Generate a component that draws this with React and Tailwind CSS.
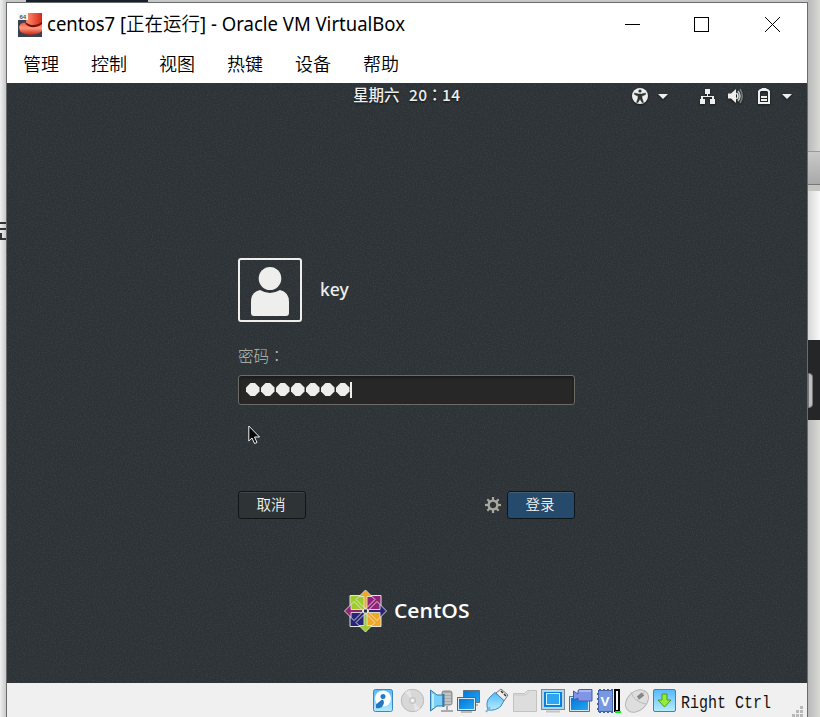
import React from "react";

const menus = ["管理", "控制", "视图", "热键", "设备", "帮助"];

function HatIcon() {
  return (
    <svg width="24" height="24" viewBox="0 0 24 24" className="shrink-0">
      <defs>
        <linearGradient id="hat" x1="0" y1="0" x2="0" y2="1">
          <stop offset="0" stopColor="#f5543a" />
          <stop offset=".45" stopColor="#ff9a80" />
          <stop offset="1" stopColor="#c92512" />
        </linearGradient>
        <linearGradient id="crown" x1="0" y1="0" x2="1" y2="0">
          <stop offset="0" stopColor="#ff9275" />
          <stop offset="1" stopColor="#d92413" />
        </linearGradient>
      </defs>
      <rect width="24" height="24" fill="#394150" />
      <path d="M9 0H24V12Q16 15 8 10Z" fill="url(#crown)" />
      <path d="M1 14C2 10 5 9 8 10C12 15 19 15 24 10V18C19 23 6 23 2 18Z" fill="url(#hat)" />
      <path d="M8 9.500C12 13 19 13 24 9V11C18 15.500 11 15 7.500 11Z" fill="#76120d" />
      <rect width="10" height="7" fill="#f3f5f6" />
      <text x="1.500" y="6" fontSize="6" fontWeight="700" fontFamily="Liberation Sans, sans-serif" fill="#4c545d">64</text>
    </svg>
  );
}

function TitleBar() {
  return (
    <div className="flex h-11 items-center bg-white pl-[11px] text-black">
      <HatIcon />
      <svg width="366" height="44" className="ml-[5px] shrink-0 overflow-visible font-['Noto_Sans','Noto_Sans_CJK_SC',sans-serif]">
        <text x="0" y="28" fontSize="19.500" textLength="358" lengthAdjust="spacingAndGlyphs">centos7 [<tspan className="font-['Noto_Sans_CJK_SC',sans-serif] font-[350]">正在运行</tspan>] - Oracle VM VirtualBox</text>
      </svg>
      <svg width="156" height="18" viewBox="0 0 156 18" fill="none" stroke="#000" className="ml-[211px] shrink-0">
        <path d="M1 8.500H16M70.500 1.500H84.500V15.500H70.500ZM141 1L156 16M156 1L141 16" shapeRendering="crispEdges" />
      </svg>
    </div>
  );
}

function StatusIcons() {
  return (
    <svg width="168" height="20" viewBox="632 86 168 20" fill="#eeeeec" className="drop-shadow-[0_1px_1px_#151819]">
      <circle cx="640" cy="96" r="8" />
      <circle cx="640" cy="91" r="1.600" fill="#2e3436" />
      <path d="M634.500 93L638.500 94H641.500L645.500 93V94.500L642 96V98L643.500 102.500H642L640 99L638 102.500H636.500L638 98V96L634.500 94.500Z" fill="#2e3436" stroke="#2e3436" strokeWidth=".5" />
      <path d="M658 94H668L663 99ZM782 94H792L787 99Z" />
      <path d="M705 89h5v5h-2v2h6v3h1v5h-5v-5h2v-2h-9v2h2v5h-5v-5h1v-3h6v-2h-2Z" />
      <path d="M728 93.500h3l5-4.500v14l-5-4.500h-3Z" />
      <path d="M736.500 93Q739.500 96 736.500 99" fill="none" stroke="#eeeeec" strokeWidth="1.600" />
      <path d="M738 91Q742 96 738 101" fill="none" stroke="#c6c9c7" strokeWidth="1.600" />
      <path d="M740 89Q744.500 96 740 103" fill="none" stroke="#777b7c" strokeWidth="1.600" />
      <path fillRule="evenodd" d="M760 89h1.500v-1h5v1h1.500l2 2v13h-12V91ZM761 91l-1 1v10h8V92l-1-1Z" />
      <path d="M761 96h6v2h-6ZM761 99h6v2h-6Z" />
    </svg>
  );
}

function Avatar() {
  return (
    <div className="size-16 rounded-[3px] border-2 border-[#eeeeec]">
      <svg width="60" height="60" viewBox="0 0 60 60" fill="#eeeeec">
        <ellipse cx="30" cy="18.500" rx="11.300" ry="11.500" />
        <path d="M20 30Q30 36 40 30Q49 32 49 42V53Q49 56 46 56H14Q11 56 11 53V42Q11 32 20 30Z" />
      </svg>
    </div>
  );
}

function Gear() {
  return (
    <svg width="16" height="16" viewBox="-8 -8 16 16" fill="none" stroke="#aaa99f">
      <circle r="4.400" strokeWidth="2.400" />
      {[0, 45, 90, 135, 180, 225, 270, 315].map((a) => (
        <path key={a} d="M0 -5V-8" strokeWidth="2.200" transform={`rotate(${a})`} />
      ))}
    </svg>
  );
}

const arms = [
  { angle: 0, square: "#932279", arrow: "#efa724" },
  { angle: 90, square: "#efa724", arrow: "#262577" },
  { angle: 180, square: "#262577", arrow: "#9ccd2a" },
  { angle: 270, square: "#9ccd2a", arrow: "#932279" },
];

function CentLogo() {
  return (
    <svg width="126" height="44" viewBox="0 0 126 44" className="overflow-visible">
      <g stroke="#e4e4e0" strokeWidth="1" transform="translate(21.500 22)">
        {arms.map((a) => (
          <path key={a.angle} d="M.5 -15.500H15.500V-.5H.5Z" fill={a.square} transform={`rotate(${a.angle})`} />
        ))}
        {arms.map((a) => (
          <g key={a.angle} transform={`rotate(${a.angle})`}>
            <path d="M0 -21L6.500 -14.500H1.500V-3H-1.500V-14.500H-6.500Z" fill={a.arrow} strokeWidth=".9" />
            <path d="M6.500 -14.500L9.500 -11.500L2 -4M-6.500 -14.500L-9.500 -11.500L-2 -4" fill="none" strokeWidth=".9" />
          </g>
        ))}
        <path d="M-2 -2H2V2H-2Z" fill="#293136" />
      </g>
      <text x="50" y="28.500" fontSize="19" fontWeight="600" fill="#fff" fontFamily="Open Sans, sans-serif" textLength="75.500" lengthAdjust="spacingAndGlyphs">CentOS</text>
    </svg>
  );
}

function Guest() {
  return (
    <main className="relative isolate flex h-[600px] flex-col bg-[#2c3235] font-['Noto_Sans','Noto_Sans_CJK_SC',sans-serif]">
      <svg className="pointer-events-none absolute inset-0 -z-10" width="800" height="600">
        <filter id="grain" x="0" y="0" width="100%" height="100%">
          <feTurbulence type="fractalNoise" baseFrequency=".75" numOctaves="2" seed="4" />
          <feColorMatrix values="0 0 0 0 .65  0 0 0 0 .75  0 0 0 0 .75  .5 0 0 0 -.19" />
        </filter>
        <rect width="800" height="600" filter="url(#grain)" opacity=".3" />
      </svg>
      <header className="flex h-[27px] pl-[346px]">
        <div className="flex h-[25px] w-[110px] whitespace-nowrap text-[15.500px] font-medium leading-[23px] text-[#eee] font-['Noto_Sans_CJK_TC',sans-serif] [text-shadow:0_1px_2px_#111]">
          <span className="w-[56px]">星期六</span>
          <span className="w-[18px] tracking-[.4px]">20</span>
          <span className="w-[15px] text-center">：</span>
          <span className="tracking-[.4px]">14</span>
        </div>
        <div className="ml-[169px] pt-[3px]"><StatusIcons /></div>
      </header>
      <section className="ml-[231px] mt-[148px] w-[337px]">
        <div className="flex items-center gap-[18px]">
          <Avatar />
          <span className="pb-[2px] text-[17.500px] font-medium leading-6 text-[#eeeeec]">key</span>
        </div>
        <div className="mt-[21px] h-[27px] text-[15.500px] font-light leading-[24px] text-[#babdb6] font-['Noto_Sans_CJK_TC',sans-serif]">密码：</div>
        <div className="mt-[5px] flex h-[30px] items-center gap-px rounded-[3px] border border-[#6b6c66] bg-[#272727] pb-px pl-[7px] shadow-[inset_0_2px_3px_#1b1b1b]">
          {[0, 1, 2, 3, 4, 5, 6].map((n) => (
            <svg key={n} width="14" height="14" viewBox="0 0 14 14" fill="#eeeeec"><path d="M4.500 0H9L13.500 4.500V8.500L9 13H4.500L0 8.500V4.500Z" /></svg>
          ))}
          <i className="-ml-px h-4 w-[2px] bg-[#eeeeec]" />
        </div>
        <svg className="ml-[10px] mt-5" width="14" height="20" viewBox="0 0 14 20"><path d="M.8 1V16L4 13L6.500 18.500L9 17.500L6.500 12H11.500Z" fill="#070809" stroke="#f3f3f3" /></svg>
        <div className="mt-[46px] flex h-7 items-center text-[14.500px] font-[350] leading-6 text-[#f4f4f2] font-['Noto_Sans_CJK_SC',sans-serif]">
          <button className="h-7 w-[68px] rounded-[3px] border border-[#111517] bg-[#2e3436] pb-[3px] pr-[2px] shadow-[inset_0_1px_0_#41484a]">取消</button>
          <div className="ml-[179px] mr-[6px]"><Gear /></div>
          <button className="h-7 w-[68px] rounded-[3px] border border-[#0e151a] bg-[#264a6c] pb-[3px] pr-[2px] shadow-[inset_0_1px_0_#455d70]">登录</button>
        </div>
      </section>
      <div className="ml-[337px] mt-[70px]"><CentLogo /></div>
    </main>
  );
}

function DeviceIcons() {
  return (
    <svg width="305" height="30" viewBox="373 687 305 30" className="shrink-0">
      <defs>
        <linearGradient id="sky" x1="0" y1="0" x2="0" y2="1"><stop stopColor="#55b8ff" /><stop offset="1" stopColor="#b5edff" /></linearGradient>
        <linearGradient id="screen" x1="0" y1="0" x2="1" y2="1"><stop stopColor="#0875d6" /><stop offset="1" stopColor="#20a8f4" /></linearGradient>
      </defs>
      <rect x="373.500" y="689.500" width="19" height="22" rx="2" fill="url(#sky)" stroke="#3b86bb" />
      <circle cx="383" cy="698.500" r="8" fill="#fff" />
      <path d="M376 704.500L382 699.500Q386 701 382 707Q378 709 376 708Z" fill="#2478c0" /><circle cx="383" cy="696.500" r="2.500" fill="#267bc3" />

      <circle cx="412.500" cy="700.500" r="11.200" fill="#d8d8d8" stroke="#bbb" />
      <path d="M412 700L405 692L410 690ZM413 701L420 709L415 711Z" fill="#e6e6e6" />
      <circle cx="412.500" cy="700.500" r="3" fill="#ddd" stroke="#bbb" /><circle cx="412.500" cy="700.500" r="1.200" fill="#fff" />

      <rect x="442" y="691" width="10" height="14" rx="2" fill="#aaa" stroke="#888" />
      <path d="M443 694H451M443 697H451M443 700H451M443 703H451" stroke="#ddd" />
      <path d="M447 706V711M441 711H453" stroke="#aaa" strokeWidth="2" />
      <path d="M430.500 690L437 695H443V706H437L430.500 711Z" fill="#7bd0fa" stroke="#347caf" />
      <path d="M433 694V708" stroke="#b9eeff" strokeWidth="2" /><path d="M443.500 694V707" stroke="#3478ad" strokeWidth="2" />

      <path d="M463.500 690.500H479.500V702.500H463.500Z" fill="url(#screen)" stroke="#65727a" />
      <path d="M472 705H478" stroke="#777" />
      <path d="M457.500 697.500H475.500V710.500H457.500Z" fill="#d5e6ee" stroke="#506577" />
      <path d="M459 699H474V709H459Z" fill="url(#screen)" /><path d="M461 712H472" stroke="#bbb" strokeWidth="2" />

      <path d="M496 693L501 689L508 695L504 701Z" fill="#eee" stroke="#777" />
      <path d="M501 691L503 693M504 694L506 696" stroke="#333" strokeWidth="1.500" />
      <path d="M488 710Q485 702 490 697L495 692.500L504 700.500L501 706Q496 711 488 710Z" fill="url(#sky)" stroke="#4287b9" />
      <path d="M486 712L490 707" stroke="#78b4da" strokeWidth="2" />

      <path d="M513.500 711.500V693.500H524.500L527.500 690.500H536.500V711.500Z" fill="#ddd" stroke="#c2c2c2" />
      <path d="M514 695H526L529 692" fill="none" stroke="#c9c9c9" />

      <rect x="541.500" y="689.500" width="23" height="20" fill="#b5d4e5" stroke="#718b9b" />
      <rect x="544" y="692" width="18" height="15" fill="#0980d9" />
      <rect x="546.500" y="693.500" width="13" height="11" fill="#2ca5f3" stroke="#d1f2ff" />
      <path d="M546 711.500H560" stroke="#c4c4c4" strokeWidth="2" />

      <path d="M569.500 696.500H589.500V711.500H569.500Z" fill="#d5e6ee" stroke="#54728a" />
      <path d="M571 698H588V710H571Z" fill="url(#screen)" />
      <path d="M573.500 691L578 694V691Q578 689.500 580 689.500H592V701H578V698L573.500 700Z" fill="#8095e4" stroke="#435cb0" />
      <path d="M579 691H591" stroke="#a8b7f3" strokeWidth="2" />

      <path d="M600 689V713M604 689V713M608 689V713M612 689V713" stroke="#4265a7" strokeWidth="2" />
      <path d="M597 694H600M597 699H600M597 704H600M597 709H600" stroke="#4265a7" strokeWidth="2" />
      <rect x="598.500" y="690.500" width="14" height="21" fill="#7698df" stroke="#4564a5" />
      <text x="600.500" y="706" fontSize="13.500" fontWeight="700" fontFamily="Liberation Sans, sans-serif" fill="#fff">V</text>
      <path d="M614 689H620V712H614Z" fill="#000" /><path d="M616 691H618V710H616Z" fill="#fff" /><path d="M615 712H621" stroke="#00f514" strokeWidth="2" />

      <ellipse cx="637" cy="701" rx="13" ry="9.500" transform="rotate(-43 637 701)" fill="#dedede" stroke="#b7b7b7" />
      <path d="M631 692Q634 702 646 704M637 701L645 691" fill="none" stroke="#bbb" />
      <path d="M638 698L643 694" stroke="#858585" strokeWidth="4" />

      <rect x="653.500" y="689.500" width="22" height="22" rx="1.500" fill="url(#sky)" stroke="#4581af" />
      <path d="M662 694H667V700H671L664.500 707L658 700H662Z" fill="#91ed3b" stroke="#57961d" />
    </svg>
  );
}

function Footer() {
  return (
    <footer className="flex h-[34px] bg-[#f0f0f0] pl-[366px] pt-1">
      <DeviceIcons />
      <svg width="95" height="30" className="ml-[2px] shrink-0 overflow-visible">
        <text x="1" y="21" fontFamily="Liberation Mono, monospace" fontSize="17.500" textLength="90" lengthAdjust="spacingAndGlyphs" fill="#111">Right Ctrl</text>
      </svg>
      <svg width="12" height="12" viewBox="0 0 12 12" className="ml-[17px] mt-[18px]" fill="#b8b8b8"><path d="M8 1h3v3H8ZM4 5h3v3H4ZM8 5h3v3H8ZM0 9h3v3H0ZM4 9h3v3H4ZM8 9h3v3H8Z" /></svg>
    </footer>
  );
}

export default function App() {
  return (
    <div className="flex h-[717px] w-[820px] overflow-hidden bg-[#ddd]">
      <aside className="flex w-[6px] shrink-0 flex-col bg-linear-to-r from-[#f0f0f0] to-[#c9c9c9] pt-[222px]">
        <div className="h-[18px] border-y-2 border-[#303234] pt-[4px]"><div className="h-[2px] bg-[#303234]" /><div className="mt-[3px] h-[7px] w-[2px] bg-[#303234]" /></div>
      </aside>
      <div className="w-[802px] shrink-0">
        <div className="flex h-[2px] bg-[#c7c7c7] pl-5"><div className="w-[122px] bg-[#171e2c]" /></div>
        <div className="h-[715px] border border-b-0 border-[#686c6d]">
          <TitleBar />
          <nav className="flex h-9 gap-8 bg-white pl-4 pt-[3px] text-[18px] font-[350] leading-[26px] text-black font-['Noto_Sans_CJK_SC',sans-serif]">
            {menus.map((m) => <span key={m} className="w-9 whitespace-nowrap">{m}</span>)}
          </nav>
          <Guest />
          <Footer />
        </div>
      </div>
      <aside className="flex w-3 shrink-0 flex-col bg-linear-to-r from-[#b9b9b9] to-[#d9d9d6]">
        <div className="h-[151px]" />
        <div className="h-[34px] border-b border-t border-b-[#777] border-t-[#999] bg-linear-to-b from-[#c9c9c9] to-[#a9a9a9]" />
        <div className="h-[6px] bg-[#c4c4c1]" />
        <div className="h-[149px] bg-linear-to-r from-[#d6d6d6] to-[#fafafa]" />
        <div className="h-[80px] bg-[#252628] pt-[33px]"><div className="h-[35px] w-[5px] rounded-r-sm border border-[#777] bg-[#bebebe]" /></div>
      </aside>
    </div>
  );
}
